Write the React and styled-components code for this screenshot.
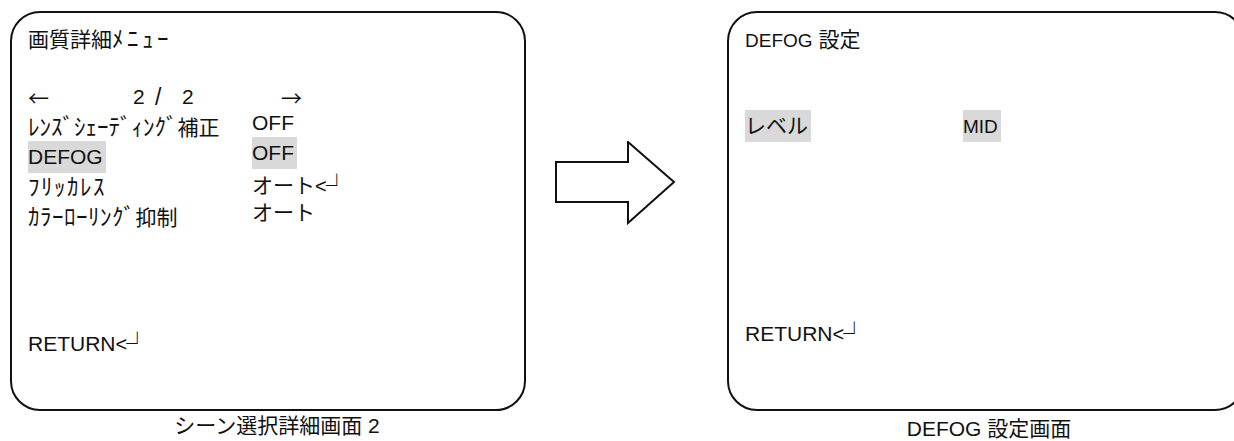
import React from "react";
import styled, { createGlobalStyle } from "styled-components";

const GlobalStyle = createGlobalStyle`
  html, body {
    margin: 0;
    background: #fff;
    overflow: hidden;
  }
  body {
    font-family: "Liberation Sans", "Noto Sans CJK JP", sans-serif;
    color: #111;
  }
`;

const Page = styled.div`
  display: flex;
  align-items: flex-start;
  width: 1234px;
  height: 441px;
  box-sizing: border-box;
  padding: 11px 0 0 10px;
  overflow: hidden;
`;

const Panel = styled.div`
  flex: none;
  display: flex;
  flex-direction: column;
  width: ${p => p.$width}px;
`;

const Screen = styled.div`
  box-sizing: border-box;
  height: 400px;
  border: 2px solid #111;
  border-radius: 30px;
  display: flex;
  flex-direction: column;
  padding: ${p => p.$pad};
  font-size: 21px;
`;

const Title = styled.div`
  height: 30px;
  line-height: 30px;
  white-space: nowrap;
`;

const Latin = styled.span`
  font-size: ${p => p.$size || 21}px;
`;

// half-width katakana run
const Half = styled.span`
  font-size: 23px;
  letter-spacing: ${p => p.$spacing || 0}px;
`;

const Menu = styled.div`
  display: grid;
  grid-template-columns: ${p => p.$label}px auto;
  grid-auto-rows: 30px;
  margin-top: ${p => p.$top}px;
  white-space: nowrap;
`;

const Label = styled.div`
  line-height: 30px;
`;

const Value = styled.div`
  line-height: 30px;
  margin-top: ${p => p.$lift || 0}px;
`;

const Hl = styled.span`
  display: inline-block;
  background: #d9d9d9;
  height: 32px;
  line-height: 32px;
  margin: -1px 0;
  padding-right: 3px;
`;

const Pager = styled.div`
  grid-column: 1 / -1;
  display: grid;
  grid-template-columns: 105px 22px 27px 99px auto;
  line-height: 30px;
`;

const Glyph = styled.span`
  font-family: "Noto Sans CJK JP", sans-serif;
  font-size: ${p => p.$size || 21}px;
`;

const Footer = styled.div`
  margin-top: auto;
  height: 30px;
  line-height: 30px;
  white-space: nowrap;
`;

const EnterLt = styled.span`
  font-size: 20px;
`;

const EnterCorner = styled.span`
  font-family: "Noto Sans CJK JP", sans-serif;
  font-size: 22px;
  margin-left: -1px;
`;

const Caption = styled.div`
  height: 30px;
  line-height: 30px;
  margin-top: ${p => p.$top || 0}px;
  padding-left: ${p => p.$shift || 0}px;
  text-align: center;
  font-size: 21px;
  white-space: nowrap;
`;

const ArrowSlot = styled.div`
  flex: none;
  width: 201px;
  padding: 130px 0 0 29px;
  box-sizing: border-box;
`;

const Enter = () => (
  <>
    <EnterLt>&lt;</EnterLt>
    <EnterCorner>┘</EnterCorner>
  </>
);

const BigArrow = () => (
  <svg width="122" height="86" viewBox="0 0 122 86">
    <polygon
      points="1,21 73,21 73,1 119,41 73,82 73,61 1,61"
      fill="#fff"
      stroke="#111"
      strokeWidth="2"
    />
  </svg>
);

const DetailMenu = () => (
  <Panel $width={516}>
    <Screen $pad="11px 16px 53px 16px">
      <Title>
        画質詳細<Half $spacing={3.5}>ﾒﾆｭｰ</Half>
      </Title>
      <Menu $label={224} $top={28}>
        <Pager>
          <Glyph>←</Glyph>
          <span>2</span>
          <Latin $size={23}>/</Latin>
          <span>2</span>
          <Glyph>→</Glyph>
        </Pager>
        <Label>
          <Half>ﾚﾝｽﾞｼｪｰﾃﾞｨﾝｸﾞ</Half>補正
        </Label>
        <Value $lift={-4}>OFF</Value>
        <Label>
          <Hl>DEFOG</Hl>
        </Label>
        <Value $lift={-4}>
          <Hl>OFF</Hl>
        </Value>
        <Label>
          <Half $spacing={1.5}>ﾌﾘｯｶﾚｽ</Half>
        </Label>
        <Value $lift={-4}>
          オート<Enter />
        </Value>
        <Label>
          <Half $spacing={0.5}>ｶﾗｰﾛｰﾘﾝｸﾞ</Half>抑制
        </Label>
        <Value $lift={-4}>オート</Value>
      </Menu>
      <Footer>
        RETURN<Enter />
      </Footer>
    </Screen>
    <Caption $shift={18}>シーン選択詳細画面 2</Caption>
  </Panel>
);

const DefogMenu = () => (
  <Panel $width={518}>
    <Screen $pad="12px 16px 63px 16px">
      <Title>
        <Latin $size={19}>DEFOG</Latin> 設定
      </Title>
      <Menu $label={218} $top={56}>
        <Label>
          <Hl>レベル</Hl>
        </Label>
        <Value>
          <Hl>
            <Latin $size={19}>MID</Latin>
          </Hl>
        </Value>
      </Menu>
      <Footer>
        RETURN<Enter />
      </Footer>
    </Screen>
    <Caption $top={3} $shift={6}>
      DEFOG 設定画面
    </Caption>
  </Panel>
);

export default function App() {
  return (
    <>
      <GlobalStyle />
      <Page>
        <DetailMenu />
        <ArrowSlot>
          <BigArrow />
        </ArrowSlot>
        <DefogMenu />
      </Page>
    </>
  );
}
